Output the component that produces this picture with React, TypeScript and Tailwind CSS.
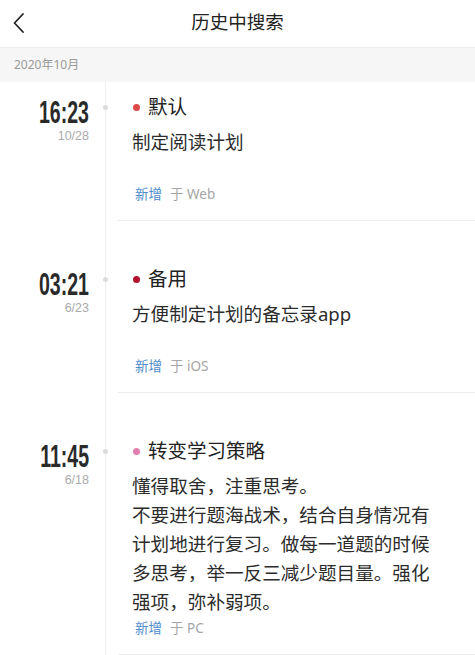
import React from "react";

type Entry = {
  time: string;
  date: string;
  title: string;
  dot: string;
  content: string;
  source: string;
  pt: string;
  tpt: string;
};

const entries: Entry[] = [
  {
    time: "16:23",
    date: "10/28",
    title: "默认",
    dot: "bg-[#de4a47]",
    content: "制定阅读计划",
    source: "Web",
    pt: "pt-[12px]",
    tpt: "pt-[17px]",
  },
  {
    time: "03:21",
    date: "6/23",
    title: "备用",
    dot: "bg-[#b3112e]",
    content: "方便制定计划的备忘录app",
    source: "iOS",
    pt: "pt-[45px]",
    tpt: "pt-[50px]",
  },
  {
    time: "11:45",
    date: "6/18",
    title: "转变学习策略",
    dot: "bg-[#e27fae]",
    content:
      "懂得取舍，注重思考。\n不要进行题海战术，结合自身情况有计划地进行复习。做每一道题的时候多思考，举一反三减少题目量。强化强项，弥补弱项。",
    source: "PC",
    pt: "pt-[45px]",
    tpt: "pt-[50px]",
  },
];

const font = { fontFamily: '"Noto Sans", "Noto Sans CJK SC", sans-serif' };

export default function App() {
  return (
    <div className="w-[475px] h-[655px] overflow-hidden bg-white text-[#222]" style={font}>
      <div className="relative h-[48px] flex items-center justify-center border-b border-[#ececec]">
        <svg className="absolute left-[12px] top-[12px]" width="14" height="22" viewBox="0 0 14 22" fill="none">
          <path d="M11 2 L2.5 11 L11 20" stroke="#222" strokeWidth="1.8" strokeLinecap="round" strokeLinejoin="round" />
        </svg>
        <span className="text-[18.5px] leading-none -mt-[3px]">历史中搜索</span>
      </div>
      <div className="h-[34px] bg-[#f6f6f6] flex items-center pl-[14px]">
        <span className="text-[12px] text-[#9a9a9a]">2020年10月</span>
      </div>
      <div>
        {entries.map((e, i) => (
          <div key={i} className="flex">
            <div className={`w-[105px] shrink-0 flex flex-col items-end pr-[16px] ${e.tpt}`}>
              <span
                className="inline-block origin-right scale-x-[0.61] text-[32px] leading-[26px] font-bold text-[#2a2a2a] whitespace-nowrap"
                style={{ fontFamily: '"Liberation Sans", sans-serif' }}
              >
                {e.time}
              </span>
              <span
                className="mt-[4px] text-[12.5px] leading-[14px] text-[#aaa]"
                style={{ fontFamily: '"Liberation Sans", sans-serif' }}
              >
                {e.date}
              </span>
            </div>
            <div className="relative flex-1 border-l border-[#efefef] pl-[12px]">
              <div className={`absolute -left-[3px] w-[5px] h-[5px] rounded-full bg-[#dcdcdc] ${i === 0 ? "top-[23px]" : "top-[56px]"}`} />
              <div className={`border-b border-[#ececec] ${e.pt} pb-[16px] pl-[14px] pr-[28px]`}>
                <div className="flex items-center h-[26px] mb-[7px]">
                  <span className={`w-[7px] h-[7px] rounded-full ${e.dot} ml-[1px]`} />
                  <span className="ml-[8px] text-[19.5px] text-[#222] leading-[26px]">{e.title}</span>
                </div>
                <div className="min-h-[55px] text-[18.6px] leading-[29px] text-[#2c2c2c] whitespace-pre-line">
                  {e.content}
                </div>
                <div className="mt-[2px] text-[13.5px] leading-[20px] pl-[3px]">
                  <span className="text-[#4f8ccb]">新增</span>
                  <span className="ml-[8px] text-[#a5a5a5]">于 {e.source}</span>
                </div>
              </div>
            </div>
          </div>
        ))}
      </div>
    </div>
  );
}
